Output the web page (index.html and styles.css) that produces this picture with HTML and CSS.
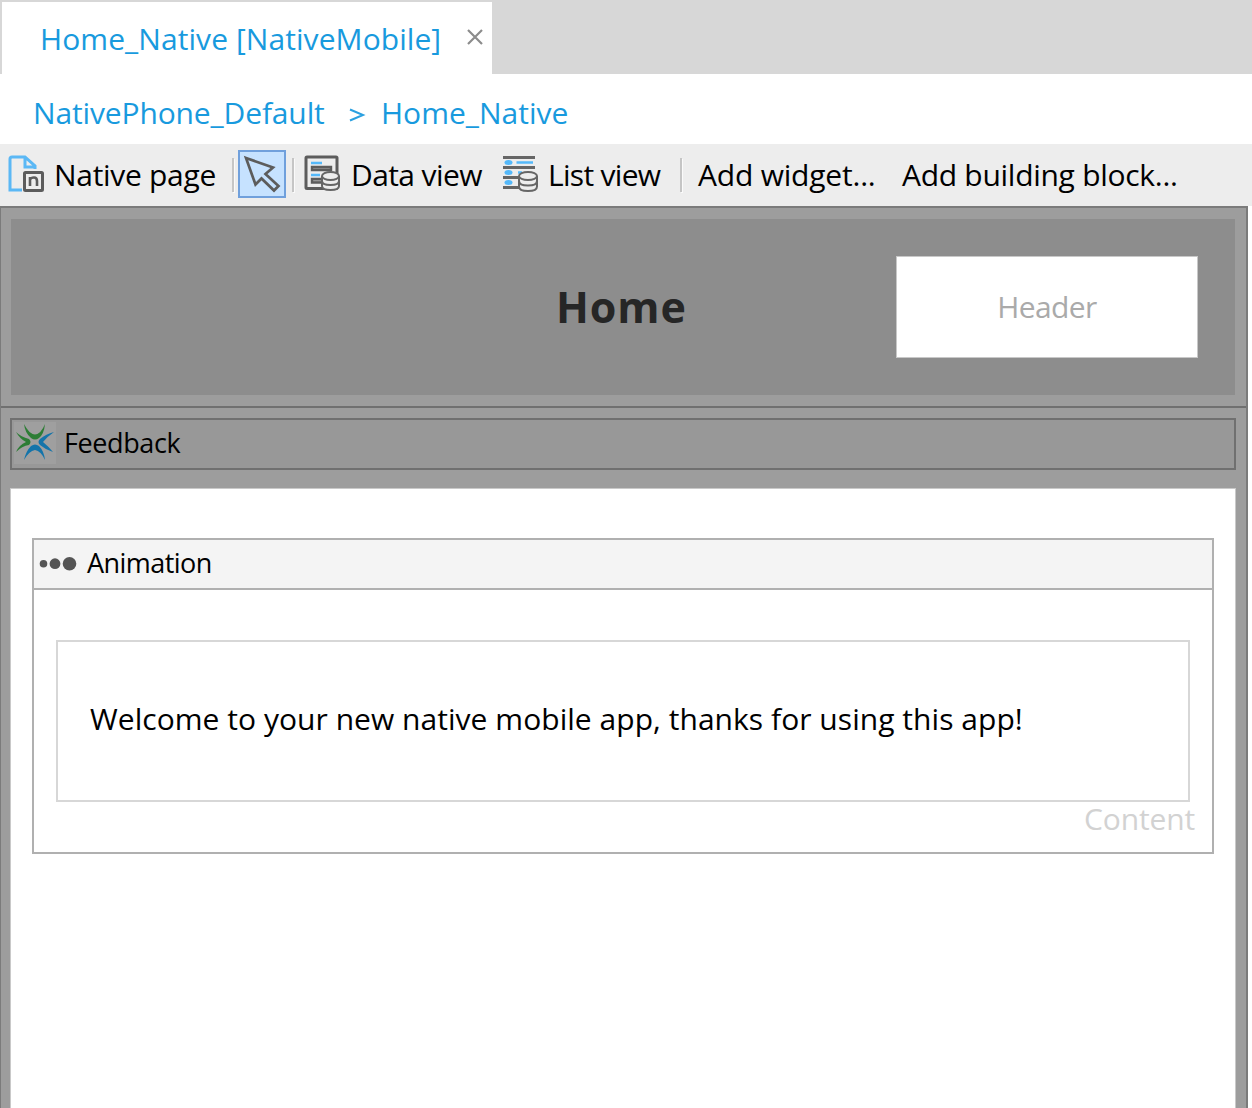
FILE: index.html
```html
<!DOCTYPE html>
<html lang="en">
<head>
<meta charset="utf-8">
<title>Home_Native [NativeMobile]</title>
<link rel="stylesheet" href="styles.css">
</head>
<body>
<div class="tabs">
  <div class="tab"><span class="text tab-title">Home_Native [NativeMobile]</span>
    <svg class="close" width="18" height="18" viewBox="0 0 18 18"><path d="M2 2L16 16M16 2L2 16" stroke="#8c8c8c" stroke-width="2.2"/></svg>
  </div>
</div>
<nav class="crumbs"><span class="text crumb-layout">NativePhone_Default</span><svg class="chevron" width="17" height="14" viewBox="0 0 17 14"><path d="M1 1.500L14 7L1 12.500" fill="none" stroke="#2ba0e0" stroke-width="2"/></svg><span class="text crumb-page">Home_Native</span></nav>
<div class="toolbar">
  <svg class="icon-page" width="38" height="38" viewBox="0 0 38 38" fill="none"><path d="M14 35H2V4Q2 2 4 2H17L27 11V14M17 2V12H27" stroke="#5bb8f5" stroke-width="3"/><rect x="16.500" y="17.500" width="18" height="18" rx="1" stroke="#5c5c5c" stroke-width="3"/><path d="M22 31V22M22 24.500Q23 22.500 26 22.500Q29 22.500 29 26V31" stroke="#5c5c5c" stroke-width="2.600"/></svg>
  <span class="text t-page">Native page</span>
  <i class="sep sep-a"></i>
  <span class="pointer"><svg width="44" height="44" viewBox="0 0 44 44"><path d="M6 6L33 15.500L25.500 22L38.500 34L34 38.500L21.500 26.500L15.500 32.500Z" fill="none" stroke="#5c5c5c" stroke-width="2.700"/></svg></span>
  <i class="sep sep-b"></i>
  <svg class="icon-data" width="37" height="38" viewBox="0 0 37 38" fill="none"><rect x="2" y="2" width="31" height="31.500" rx="1" stroke="#5c5c5c" stroke-width="3"/><path d="M7 8H18M7 20H16" stroke="#55b9fa" stroke-width="2.600"/><path d="M8 12H27V15H8ZM18 24H8V27.500H18" fill="#aaa" stroke="#5c5c5c" stroke-width="2.400"/><path d="M18 21V31Q18 35 26.500 35Q35 35 35 31V21" fill="#eee" stroke="#666" stroke-width="2"/><path d="M18 26Q18 30 26.500 30Q35 30 35 26" stroke="#666" stroke-width="2"/><ellipse cx="26.500" cy="21" rx="8.500" ry="4" fill="#eee" stroke="#666" stroke-width="2"/></svg>
  <span class="text t-data">Data view</span>
  <svg class="icon-list" width="37" height="38" viewBox="0 0 37 38" fill="none"><path d="M1 2.500H33M1 12.500H33M1 22.500H17M1 32.500H17" stroke="#666" stroke-width="3"/><path d="M14.500 7.500H31M16 17.500H20" stroke="#55b9fa" stroke-width="2.400"/><g fill="#55b9fa"><ellipse cx="6.500" cy="7.500" rx="4" ry="2.500"/><ellipse cx="6.500" cy="17.500" rx="4" ry="2.500"/><ellipse cx="6.500" cy="27.500" rx="4" ry="2.500"/></g><path d="M17 21V31.500Q17 36 26 36Q35 36 35 31.500V21" fill="#eee" stroke="#666" stroke-width="2"/><path d="M17 26Q17 30.500 26 30.500Q35 30.500 35 26" stroke="#666" stroke-width="2"/><ellipse cx="26" cy="21" rx="9" ry="4" fill="#eee" stroke="#666" stroke-width="2"/></svg>
  <span class="text t-list">List view</span>
  <i class="sep sep-c"></i>
  <span class="text t-widget">Add widget...</span>
  <span class="text t-block">Add building block...</span>
</div>
<main class="canvas">
  <section class="header-area"><div class="header-bar">
    <h1 class="text">Home</h1>
    <div class="header-slot"><span class="text t-header">Header</span></div>
  </div></section>
  <section class="body-area">
    <div class="feedback">
      <svg class="icon-feedback" width="42" height="42" viewBox="0 0 42 42"><rect width="42" height="42" fill="#9f9f9f"/><path d="M10 2Q15 12 21 12.500Q27 12 31 2Q30 12 25 16Q21 19 17 16Q11 11 10 2ZM2 10Q7 15 15 17Q18 20 15 23Q8 24 2 30Q5 23 12 20Q6 17 2 10Z" fill="#2d7d35"/><path d="M40 10Q32 12 26 17Q23 20 26 23Q32 28 39 30Q34 24 29 20Q34 14 40 10ZM10 38Q12 29 17 24Q21 21 25 24Q30 29 31 38Q27 29 21 28Q15 29 10 38Z" fill="#1474aa"/></svg>
      <span class="text t-feedback">Feedback</span>
    </div>
    <div class="page">
      <div class="animation">
        <div class="animation-head">
          <svg class="icon-dots" width="38" height="16" viewBox="0 0 38 16" fill="#555"><circle cx="4.500" cy="7.700" r="3.800"/><circle cx="16" cy="7.700" r="5.400"/><circle cx="30.500" cy="7.700" r="6.800"/></svg>
          <span class="text t-animation">Animation</span>
        </div>
        <div class="content-slot"><span class="text t-welcome">Welcome to your new native mobile app, thanks for using this app!</span></div>
        <div class="slot-label"><span class="text t-content">Content</span></div>
      </div>
    </div>
  </section>
</main>
</body>
</html>
```
FILE: styles.css
```css
* { box-sizing: border-box; }
body { margin: 0; height: 1108px; overflow: hidden; background: #fff; color: #000; font: 30px/40px "Open Sans", "Noto Sans", sans-serif; display: flex; flex-direction: column; }
svg, i { display: block; flex: none; }
.text { white-space: pre; flex: none; }
.tabs { height: 74px; flex: none; background: #d7d7d7; padding: 2px 0 0 2px; display: flex; }
.tab { width: 490px; background: #fff; display: flex; align-items: flex-start; padding: 17px 0 0 38px; color: #189ade; }
.tab-title { width: 426px; letter-spacing: 0.07px; }
.close { margin-top: 9px; }
.crumbs { height: 70px; flex: none; display: flex; align-items: flex-start; padding: 19px 0 0 33px; color: #189ade; }
.crumb-layout { width: 315px; letter-spacing: -0.14px; }
.chevron { margin: 15px 0 0 1px; }
.crumb-page { margin-left: 15px; }
.toolbar { height: 62px; flex: none; background: #ededed; display: flex; align-items: flex-start; }
.icon-page { margin: 11px 0 0 8px; }
.toolbar .text { margin-top: 11px; }
.t-page { margin-left: 8px; width: 178px; letter-spacing: -0.3px; }
.sep { width: 2px; height: 34px; margin-top: 14px; background: #c5c5c5; box-shadow: 1px 1px 0 #fafafa; }
.pointer { width: 48px; height: 48px; margin: 6px 0 0 4px; border: 2px solid #70a0dc; background: #c6e2ff; }
.sep-b { margin-left: 6px; }
.icon-data { margin: 11px 0 0 10px; }
.t-data { margin-left: 10px; width: 151px; letter-spacing: -0.6px; }
.icon-list { margin: 11px 0 0 0; }
.t-list { margin-left: 9px; width: 132px; letter-spacing: -0.7px; }
.t-widget { margin-left: 16px; width: 204px; letter-spacing: -0.2px; }
.t-block { letter-spacing: -0.28px; }
.canvas { width: 1248px; flex: 1; background: #9d9d9d; border: solid #7b7b7b; border-width: 2px 2px 0 1px; display: flex; flex-direction: column; }
.header-area { height: 200px; flex: none; border-bottom: 2px solid #707070; padding: 11px 11px 11px 10px; }
.header-bar { height: 176px; background: #8d8d8d; display: flex; align-items: center; padding: 0 37px 0 545px; justify-content: space-between; }
h1 { margin: 0; font-size: 43px; line-height: 60px; font-weight: 700; letter-spacing: 0.9px; color: #262626; }
.header-slot { width: 302px; height: 102px; border: 1px solid #c8c8c8; background: #fff; display: flex; align-items: center; justify-content: center; color: #aaa; }
.t-header { letter-spacing: -0.6px; }
.body-area { flex: 1; padding: 10px 10px 0 9px; display: flex; flex-direction: column; }
.feedback { height: 52px; flex: none; border: 2px solid #707070; background: #989898; display: flex; font-size: 27px; }
.icon-feedback { margin: 2px 0 0 2px; }
.t-feedback { margin: 3px 0 0 8px; letter-spacing: -0.4px; }
.page { flex: 1; margin-top: 18px; background: #fff; border: 1px solid #c9c9c9; border-bottom: 0; padding: 49px 21px 0; }
.animation { height: 316px; border: 2px solid #b0b0b0; }
.animation-head { height: 50px; border-bottom: 2px solid #b0b0b0; background: #f4f4f4; display: flex; font-size: 27px; }
.icon-dots { margin: 16px 0 0 5px; }
.t-animation { margin: 3px 0 0 10px; letter-spacing: -0.55px; }
.content-slot { height: 162px; margin: 50px 22px 0; border: 2px solid #d7d7d7; padding: 57px 0 0 32px; display: flex; }
.t-welcome { letter-spacing: 0.04px; }
.slot-label { display: flex; justify-content: flex-end; padding-right: 17px; margin-top: -3px; color: #d2d2d2; }
.t-content { letter-spacing: -0.15px; }
```
